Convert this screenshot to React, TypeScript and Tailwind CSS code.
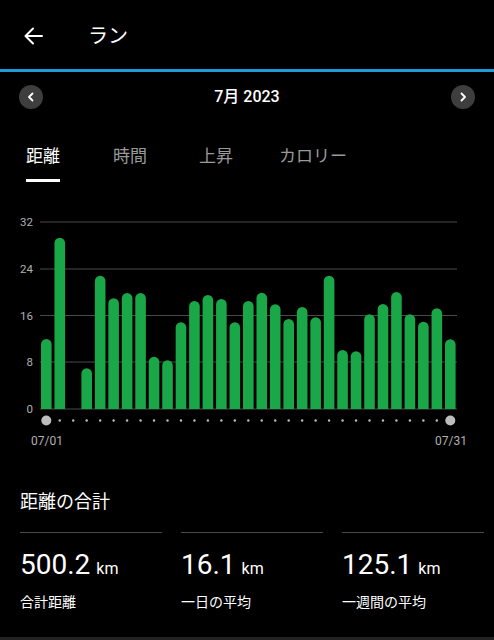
import React from "react";

const tops = [339, 237.7, 409, 368.3, 275.7, 298.3, 293, 293, 356.7, 360.3, 322.3, 301, 295, 299, 322.3, 301, 292.7, 304.3, 319, 307, 317.3, 275.7, 350, 351.3, 314.3, 304, 292, 314.3, 321.7, 308.3, 339.3];

function Chart() {
  const y0 = 210;
  const grid = [
    { v: "32", y: 222 },
    { v: "24", y: 269 },
    { v: "16", y: 315.5 },
    { v: "8", y: 362 },
    { v: "0", y: 409 },
  ];
  const pitch = (445 - 41) / 30;
  const w = 10.6;
  return (
    <svg width="494" height="240" viewBox={`0 ${y0} 494 240`} className="block">
      {grid.map((g) => (
        <g key={g.v}>
          <line x1="40" x2="457" y1={g.y} y2={g.y} stroke="#4a4a4a" strokeWidth="1" />
          <text x="33" y={g.y + 4} textAnchor="end" fill="#b0b0b0" fontSize="11.5" fontFamily="Roboto, sans-serif">
            {g.v}
          </text>
        </g>
      ))}
      {tops.map((t, i) => {
        const x = 41 + i * pitch;
        const h = 409 - t;
        if (h <= 0) return null;
        const r = w / 2;
        const d = `M${x} 409 L${x} ${t + r} A${r} ${r} 0 0 1 ${x + w} ${t + r} L${x + w} 409 Z`;
        return <path key={i} d={d} fill="#19a748" />;
      })}
      {tops.map((_, i) => {
        const cx = 41 + i * pitch + w / 2;
        if (i === 0 || i === 30) return <circle key={i} cx={cx} cy="420.5" r="5" fill="#bdbdbd" />;
        return <circle key={i} cx={cx} cy="420.5" r="1.2" fill="#bdbdbd" />;
      })}
      <text x="47" y="445" textAnchor="middle" fill="#b0b0b0" fontSize="12" fontFamily="Roboto, sans-serif">07/01</text>
      <text x="451" y="445" textAnchor="middle" fill="#b0b0b0" fontSize="12" fontFamily="Roboto, sans-serif">07/31</text>
    </svg>
  );
}

function Stat({ value, label }: { value: string; label: string }) {
  return (
    <div className="flex flex-col">
      <div className="h-px bg-[#4a4a4a]" />
      <div className="mt-[18px] flex items-baseline h-[40px]">
        <span className="text-[28px] text-white leading-none">{value}</span>
        <span className="ml-[6px] text-[16px] text-white leading-none">km</span>
      </div>
      <div className="mt-[4px] text-[14px] text-white leading-none">{label}</div>
    </div>
  );
}

export default function App() {
  return (
    <div className="w-[494px] h-[640px] bg-black overflow-hidden flex flex-col" style={{ fontFamily: 'Roboto, "Noto Sans CJK JP", sans-serif' }}>
      <div className="h-[69px] flex items-center">
        <svg width="19" height="18" viewBox="0 0 19 18" className="ml-[24px] mt-[2px]">
          <path d="M18 9H2 M9 1.5 1.5 9 9 16.5" stroke="white" strokeWidth="2" fill="none" strokeLinecap="round" strokeLinejoin="round" />
        </svg>
        <span className="ml-[45px] mt-[2px] text-[20px] text-white leading-none">ラン</span>
      </div>
      <div className="h-[3px] bg-[#1f9bd7]" />
      <div className="h-[50px] flex items-center justify-between px-[19px]">
        <div className="w-[24px] h-[24px] rounded-full bg-[#3e3e3e] flex items-center justify-center">
          <svg width="10" height="10" viewBox="0 0 10 10">
            <path d="M6.5 1.5 3 5l3.5 3.5" stroke="white" strokeWidth="1.8" fill="none" strokeLinecap="round" strokeLinejoin="round" />
          </svg>
        </div>
        <span className="text-[16px] font-medium text-white leading-none">7月 2023</span>
        <div className="w-[24px] h-[24px] rounded-full bg-[#3e3e3e] flex items-center justify-center">
          <svg width="10" height="10" viewBox="0 0 10 10">
            <path d="M3.5 1.5 7 5 3.5 8.5" stroke="white" strokeWidth="1.8" fill="none" strokeLinecap="round" strokeLinejoin="round" />
          </svg>
        </div>
      </div>
      <div className="h-[88px] flex flex-col">
        <div className="mt-[26px] flex pl-[26px] text-[17px] leading-none">
          <div className="w-[87px] flex flex-col">
            <span className="text-white">距離</span>
            <div className="mt-[14px] w-[34px] h-[3px] bg-white" />
          </div>
          <span className="w-[86px] text-[#9a9a9a]">時間</span>
          <span className="w-[80px] text-[#9a9a9a]">上昇</span>
          <span className="text-[#9a9a9a]">カロリー</span>
        </div>
      </div>
      <Chart />
      <div className="h-[187px] pl-[20px] pr-[10px] flex flex-col">
        <div className="mt-[43px] text-[18px] text-white leading-none">距離の合計</div>
        <div className="mt-[21px] grid grid-cols-3 gap-[19px]">
          <Stat value="500.2" label="合計距離" />
          <Stat value="16.1" label="一日の平均" />
          <Stat value="125.1" label="一週間の平均" />
        </div>
      </div>
      <div className="flex-1 bg-[#222]" />
    </div>
  );
}
